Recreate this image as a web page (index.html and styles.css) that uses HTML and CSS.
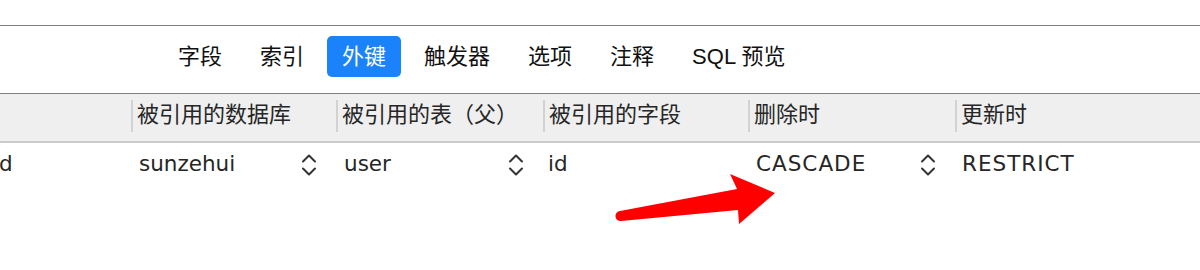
FILE: index.html
```html
<!DOCTYPE html>
<html lang="zh">
<head>
<meta charset="utf-8">
<link rel="stylesheet" href="styles.css">
</head>
<body>
<div class="top"></div>
<nav class="tabs">
  <span class="tab">字段</span>
  <span class="tab">索引</span>
  <span class="tab active">外键</span>
  <span class="tab">触发器</span>
  <span class="tab">选项</span>
  <span class="tab">注释</span>
  <span class="tab">SQL 预览</span>
</nav>
<div class="grid">
  <div class="hcell first"></div>
  <div class="hcell"><span class="hl">被引用的数据库</span></div>
  <div class="hcell"><span class="hl">被引用的表（父）</span></div>
  <div class="hcell"><span class="hl">被引用的字段</span></div>
  <div class="hcell"><span class="hl">删除时</span></div>
  <div class="hcell"><span class="hl">更新时</span></div>

  <div class="dcell first"><span class="cut">id</span></div>
  <div class="dcell"><span>sunzehui</span><svg class="chev" viewBox="0 0 16 24"><path d="M2 8.5 L8 2.5 L14 8.5 M2 15.5 L8 21.5 L14 15.5"/></svg></div>
  <div class="dcell"><span>user</span><svg class="chev" viewBox="0 0 16 24"><path d="M2 8.5 L8 2.5 L14 8.5 M2 15.5 L8 21.5 L14 15.5"/></svg></div>
  <div class="dcell narrow"><span>id</span></div>
  <div class="dcell"><span class="wide">CASCADE</span><svg class="chev" viewBox="0 0 16 24"><path d="M2 8.5 L8 2.5 L14 8.5 M2 15.5 L8 21.5 L14 15.5"/></svg></div>
  <div class="dcell last"><span class="wide">RESTRICT</span></div>
</div>
<svg class="arrow" viewBox="0 0 1200 270" width="1200" height="270">
  <path d="M620 211 L737 189 L730 174 L775 193 L739 224 L738 210 L621 221 A5 5 0 0 1 620 211 Z"/>
</svg>
</body>
</html>
```
FILE: styles.css
```css
html, body {
  margin: 0;
  padding: 0;
  background: #ffffff;
  font-family: "Liberation Sans", "Noto Sans CJK SC", sans-serif;
  font-size: 22px;
  color: #1c1c1c;
  width: 1200px;
  height: 270px;
  overflow: hidden;
  position: relative;
}
.top {
  height: 25px;
  border-bottom: 1px solid #7f7f7f;
}
.tabs {
  display: flex;
  gap: 10px;
  padding: 10px 0 0 164px;
  height: 57px;
  border-bottom: 1px solid #7f7f7f;
  box-sizing: content-box;
}
.tab {
  height: 41px;
  line-height: 41px;
  padding: 0 14px;
  border-radius: 5px;
  color: #111111;
  white-space: nowrap;
}
.tab.active {
  background: #1a82fb;
  color: #ffffff;
  padding: 0 15px;
  margin: 0 -1px;
}
.grid {
  display: grid;
  grid-template-columns: 131px 205px 207px 205px 207px 1fr;
}
.hcell {
  background: #efefef;
  border-bottom: 2px solid #cbcbcb;
  display: flex;
  align-items: flex-start;
  padding-top: 6px;
  box-sizing: content-box;
  height: 41px;
}
.hl {
  border-left: 2px solid #d2d2d2;
  padding-left: 4px;
  height: 32px;
  line-height: 30px;
  color: #262626;
  white-space: nowrap;
}
.dcell {
  height: 40px;
  display: flex;
  align-items: center;
  justify-content: space-between;
  padding: 0 19px 0 8px;
  font-family: "DejaVu Sans", "Noto Sans CJK SC", sans-serif;
  font-size: 21.5px;
  color: #262626;
  white-space: nowrap;
  overflow: hidden;
}
.dcell.narrow {
  padding-left: 5px;
}
.dcell.last {
  padding-left: 7px;
  justify-content: flex-start;
}
.wide {
  letter-spacing: 1px;
}
.dcell.first {
  padding-left: 0;
  justify-content: flex-start;
}
.cut {
  margin-left: -7px;
}
.chev {
  width: 16px;
  height: 24px;
  fill: none;
  stroke: #333333;
  stroke-width: 2;
  stroke-linecap: round;
  stroke-linejoin: round;
  margin-top: 4px;
}
.arrow {
  position: absolute;
  left: 0;
  top: 0;
  pointer-events: none;
}
.arrow path {
  fill: #ff0000;
}
```
